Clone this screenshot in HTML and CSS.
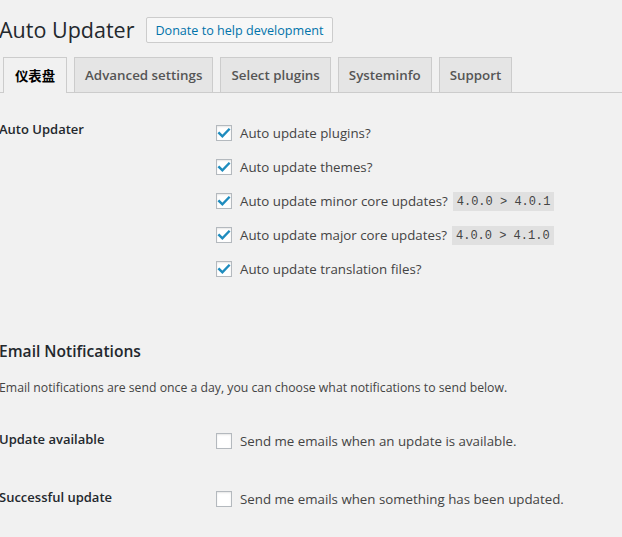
FILE: index.html
```html
<!DOCTYPE html>
<html lang="en">
<head>
<meta charset="utf-8">
<title>Auto Updater</title>
<link rel="stylesheet" href="styles.css">
</head>
<body>
<div class="wrap">
  <div class="title-row">
    <h1 class="page-title">Auto Updater</h1>
    <a class="title-action" href="#">Donate to help development</a>
  </div>

  <nav class="tabs">
    <a class="tab active" href="#">仪表盘</a>
    <a class="tab" href="#">Advanced settings</a>
    <a class="tab" href="#">Select plugins</a>
    <a class="tab" href="#">Systeminfo</a>
    <a class="tab" href="#">Support</a>
  </nav>

  <section class="form-row first">
    <div class="row-label">Auto Updater</div>
    <div class="options">
      <label class="option"><span class="cb checked"><svg viewBox="0 0 16 16" width="16" height="16"><path d="M3.2 8.2 L6.4 11.4 L12.8 4.6" fill="none" stroke="#1e8cbe" stroke-width="2.4" stroke-linecap="square"/></svg></span>Auto update plugins?</label>
      <label class="option"><span class="cb checked"><svg viewBox="0 0 16 16" width="16" height="16"><path d="M3.2 8.2 L6.4 11.4 L12.8 4.6" fill="none" stroke="#1e8cbe" stroke-width="2.4" stroke-linecap="square"/></svg></span>Auto update themes?</label>
      <label class="option"><span class="cb checked"><svg viewBox="0 0 16 16" width="16" height="16"><path d="M3.2 8.2 L6.4 11.4 L12.8 4.6" fill="none" stroke="#1e8cbe" stroke-width="2.4" stroke-linecap="square"/></svg></span>Auto update minor core updates? <code class="ver">4.0.0 &gt; 4.0.1</code></label>
      <label class="option"><span class="cb checked"><svg viewBox="0 0 16 16" width="16" height="16"><path d="M3.2 8.2 L6.4 11.4 L12.8 4.6" fill="none" stroke="#1e8cbe" stroke-width="2.4" stroke-linecap="square"/></svg></span>Auto update major core updates? <code class="ver">4.0.0 &gt; 4.1.0</code></label>
      <label class="option"><span class="cb checked"><svg viewBox="0 0 16 16" width="16" height="16"><path d="M3.2 8.2 L6.4 11.4 L12.8 4.6" fill="none" stroke="#1e8cbe" stroke-width="2.4" stroke-linecap="square"/></svg></span>Auto update translation files?</label>
    </div>
  </section>

  <h2 class="section-title">Email Notifications</h2>
  <p class="section-desc">Email notifications are send once a day, you can choose what notifications to send below.</p>

  <section class="form-row email">
    <div class="row-label">Update available</div>
    <div class="options">
      <label class="option"><span class="cb"></span>Send me emails when an update is available.</label>
    </div>
  </section>
  <section class="form-row email">
    <div class="row-label">Successful update</div>
    <div class="options">
      <label class="option"><span class="cb"></span>Send me emails when something has been updated.</label>
    </div>
  </section>
</div>
</body>
</html>
```
FILE: styles.css
```css
html, body {
  margin: 0;
  padding: 0;
  background: #f1f1f1;
}
body {
  font-family: "Open Sans", "Noto Sans", sans-serif;
  font-size: 13px;
  color: #444;
  overflow: hidden;
}
.wrap {
  margin-left: -1px;
}
.title-row {
  display: flex;
  align-items: center;
  padding-top: 17px;
  height: 26px;
}
.page-title {
  margin: 0;
  font-size: 21.5px;
  font-weight: 400;
  line-height: 26px;
  color: #23282d;
}
.title-action {
  margin-left: 12px;
  height: 24px;
  display: flex;
  align-items: center;
  padding: 0 8px;
  border: 1px solid #ccc;
  border-radius: 2px;
  background: #f7f7f7;
  color: #0073aa;
  text-decoration: none;
  font-size: 12.6px;
}
.tabs {
  display: flex;
  gap: 7px;
  margin-top: 14px;
  padding-left: 4px;
  border-bottom: 1px solid #ccc;
  height: 35px;
}
.tab {
  display: flex;
  align-items: center;
  height: 34px;
  padding: 0 10px;
  border: 1px solid #ccc;
  border-bottom: none;
  background: #e5e5e5;
  color: #555;
  font-size: 13.35px;
  font-weight: 600;
  text-decoration: none;
}
.tab.active {
  background: #f1f1f1;
  color: #000;
  height: 35px;
  margin-bottom: -1px;
  padding: 0 11px;
  font-family: "Noto Sans CJK SC", sans-serif;
  font-weight: 700;
}
.form-row {
  display: grid;
  grid-template-columns: 217px 1fr;
}
.row-label {
  color: #23282d;
  font-weight: 600;
  font-size: 13px;
  line-height: 20px;
}
.form-row.first {
  padding-top: 26px;
}
.form-row.first .options {
  padding-top: 2px;
}
.options {
  display: flex;
  flex-direction: column;
  gap: 10px;
}
.option {
  display: flex;
  align-items: center;
  min-height: 24px;
  font-size: 13.3px;
  color: #444;
}
.cb {
  box-sizing: border-box;
  width: 16px;
  height: 16px;
  flex: none;
  border: 1px solid #b4b9be;
  background: #fff;
  box-shadow: inset 0 1px 2px rgba(0,0,0,.1);
  margin-right: 8px;
  display: flex;
  align-items: center;
  justify-content: center;
}
.cb svg {
  display: block;
  margin: -1px;
}
.ver {
  font-family: "Liberation Mono", monospace;
  font-size: 12px;
  background: rgba(0,0,0,.07);
  color: #444;
  padding: 3px 4px 2px;
  margin-left: 5px;
}
.section-title {
  margin: 58px 0 0;
  font-size: 15.6px;
  font-weight: 600;
  line-height: 24px;
  color: #23282d;
}
.section-desc {
  margin: 15px 0 14px;
  font-size: 12.25px;
  line-height: 20px;
  color: #444;
}
.form-row.email {
  padding: 17px 0;
}
.form-row.email .row-label {
  line-height: 20px;
}
```
